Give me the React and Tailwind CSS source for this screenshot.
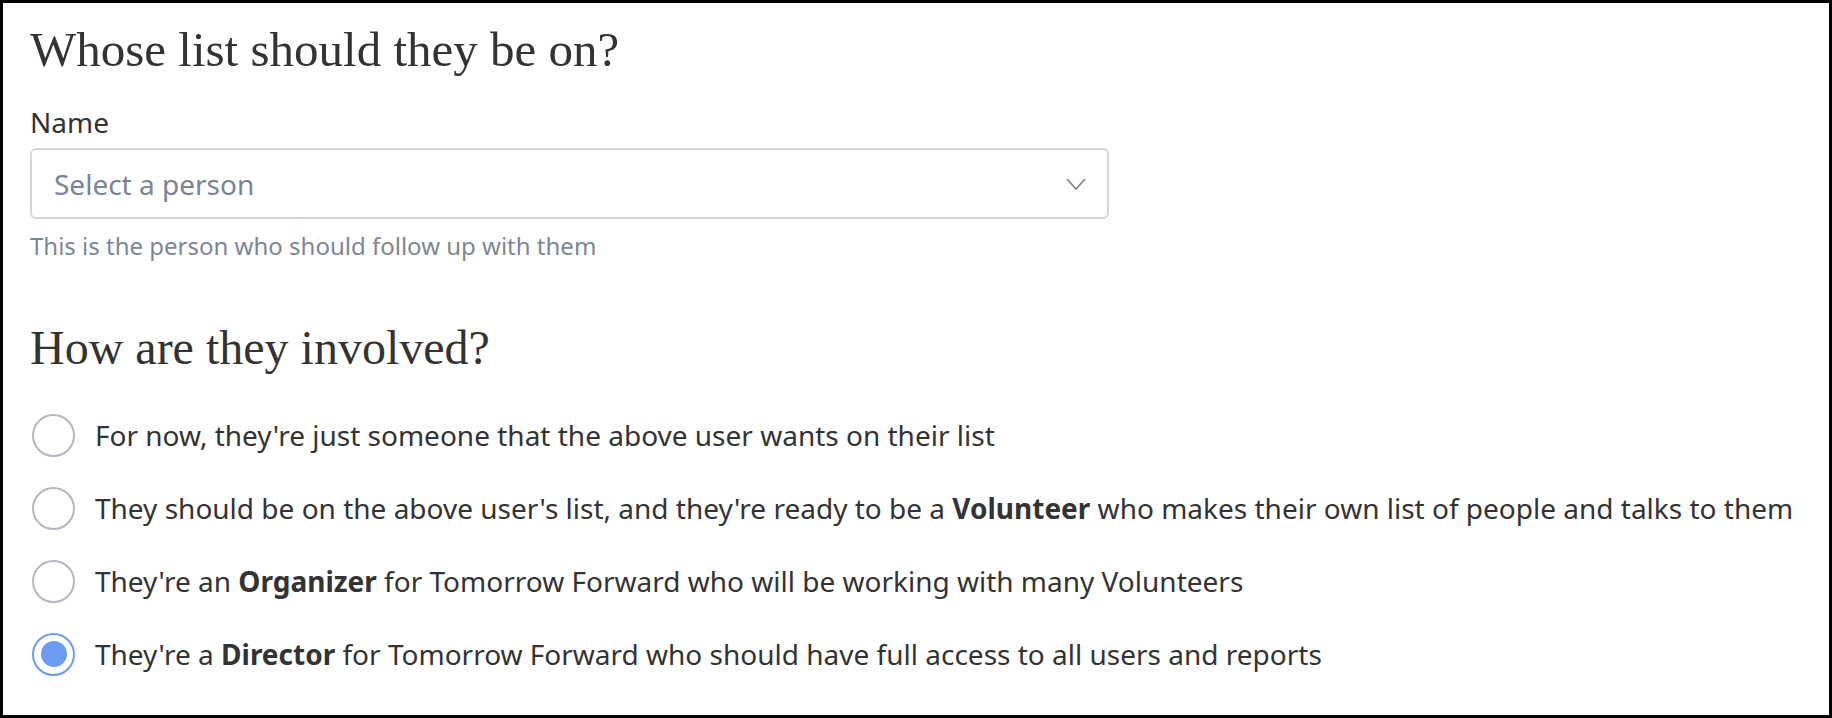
import { useState } from "react";

const options = [
  { id: "list", label: <>For now, they're just someone that the above user wants on their list</> },
  {
    id: "volunteer",
    label: (
      <>
        They should be on the above user's list, and they're ready to be a <b className="font-bold">Volunteer</b> who makes
        their own list of people and talks to them
      </>
    ),
  },
  {
    id: "organizer",
    label: (
      <>
        They're an <b className="font-bold">Organizer</b> for Tomorrow Forward who will be working with many Volunteers
      </>
    ),
  },
  {
    id: "director",
    label: (
      <>
        They're a <b className="font-bold">Director</b> for Tomorrow Forward who should have full access to all users and
        reports
      </>
    ),
  },
];

function Radio({ checked }) {
  return (
    <span
      className={
        checked
          ? "flex h-[43px] w-[43px] shrink-0 items-center justify-center rounded-full border-2 border-[#6d9bf3] bg-white"
          : "flex h-[43px] w-[43px] shrink-0 items-center justify-center rounded-full border-2 border-[#b4b8c0] bg-white"
      }
    >
      {checked && <span className="h-[26px] w-[26px] rounded-full bg-[#6d9bf3]" />}
    </span>
  );
}

export default function App() {
  const [role, setRole] = useState("director");

  return (
    <div
      className="h-[718px] w-[1832px] border-[3px] border-black bg-white pl-[27px] pt-[18px] text-[#333333]"
      style={{ fontFamily: '"Noto Sans", sans-serif' }}
    >
      <h2 className="text-[49px] leading-[58px]" style={{ fontFamily: '"Liberation Serif", serif' }}>
        Whose list should they be on?
      </h2>

      <label className="mt-[27px] block text-[28px] leading-[32px]">Name</label>
      <button
        type="button"
        className="mt-[10px] flex h-[71px] w-[1079px] items-center justify-between rounded-md border-2 border-[#d6d6d6] bg-white pl-[22px] pr-[21px] text-left text-[28px] text-[#7b8494]"
      >
        <span>Select a person</span>
        <svg width="20" height="14" viewBox="0 0 20 14" fill="none">
          <path d="M1 2 L10 12 L19 2" stroke="#7b8394" strokeWidth="1.7" />
        </svg>
      </button>
      <p className="mt-[13px] text-[24px] leading-[28px] text-[#7e8696]">This is the person who should follow up with them</p>

      <h2 className="mt-[59px] text-[48px] leading-[58px]" style={{ fontFamily: '"Liberation Serif", serif' }}>
        How are they involved?
      </h2>

      <div className="mt-[36px] flex flex-col gap-[29px] pl-[2px]">
        {options.map((o) => (
          <label key={o.id} className="flex h-[44px] cursor-pointer items-center gap-[20px] text-[28px]" onClick={() => setRole(o.id)}>
            <Radio checked={role === o.id} />
            <span>{o.label}</span>
          </label>
        ))}
      </div>
    </div>
  );
}
